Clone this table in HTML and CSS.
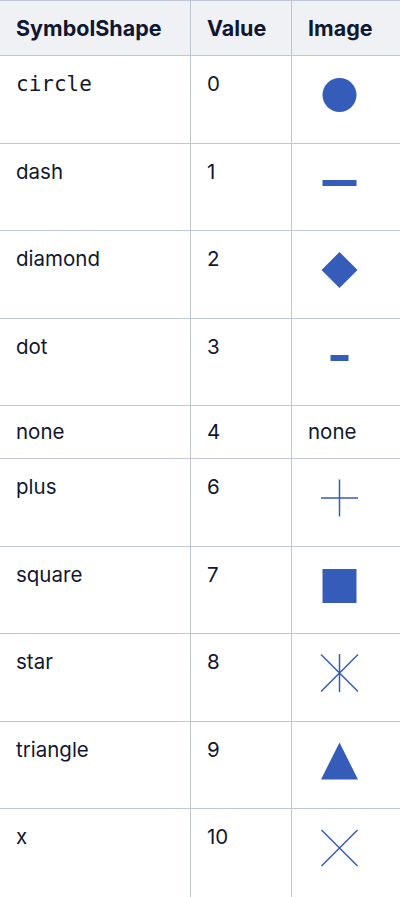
FILE: index.html
```html
<!DOCTYPE html>
<html>
<head>
<meta charset="utf-8">
<link rel="stylesheet" href="styles.css">
</head>
<body>
<table class="shapes">
  <colgroup><col class="c1"><col class="c2"><col class="c3"></colgroup>
  <thead>
    <tr><th>SymbolShape</th><th>Value</th><th>Image</th></tr>
  </thead>
  <tbody>
    <tr class="img-row"><td><code>circle</code></td><td>0</td><td class="pic"><svg class="icon" viewBox="0 0 63 46"><circle cx="31.5" cy="23" r="17"/></svg></td></tr>
    <tr class="img-row"><td>dash</td><td>1</td><td class="pic"><svg class="icon" viewBox="0 0 63 46"><rect x="14.5" y="20" width="34" height="6"/></svg></td></tr>
    <tr class="img-row"><td>diamond</td><td>2</td><td class="pic"><svg class="icon" viewBox="0 0 63 46"><polygon points="31.5,5 49.5,23 31.5,41 13.5,23"/></svg></td></tr>
    <tr class="img-row"><td>dot</td><td>3</td><td class="pic"><svg class="icon" viewBox="0 0 63 46"><rect x="22.5" y="20" width="18" height="6"/></svg></td></tr>
    <tr class="text-row"><td>none</td><td>4</td><td>none</td></tr>
    <tr class="img-row"><td>plus</td><td>6</td><td class="pic"><svg class="icon line" viewBox="0 0 63 46"><path d="M13 23H50M31.5 4.5V41.5"/></svg></td></tr>
    <tr class="img-row"><td>square</td><td>7</td><td class="pic"><svg class="icon" viewBox="0 0 63 46"><rect x="14.5" y="6" width="34" height="34"/></svg></td></tr>
    <tr class="img-row"><td>star</td><td>8</td><td class="pic"><svg class="icon line" viewBox="0 0 63 46"><path d="M13 4.5L50 41.5M50 4.5L13 41.5M31.5 4V42"/></svg></td></tr>
    <tr class="img-row"><td>triangle</td><td>9</td><td class="pic"><svg class="icon" viewBox="0 0 63 46"><polygon points="31.5,4.5 50,41.5 13,41.5"/></svg></td></tr>
    <tr class="img-row last"><td>x</td><td>10</td><td class="pic"><svg class="icon line" viewBox="0 0 63 46"><path d="M13.5 5L49.5 41M49.5 5L13.5 41"/></svg></td></tr>
  </tbody>
</table>
</body>
</html>
```
FILE: styles.css
```css
html, body {
  margin: 0;
  padding: 0;
  background: #ffffff;
}
body {
  overflow: hidden;
  font-family: Inter, "Noto Sans", sans-serif;
  color: #101731;
}
.shapes {
  border-collapse: collapse;
  table-layout: fixed;
  width: 401px;
  margin-left: -1px;
  font-size: 20.5px;
  line-height: 20px;
}
.c1 { width: 191px; }
.c2 { width: 101px; }
.c3 { width: 109px; }
.shapes th,
.shapes td {
  border: 1px solid #c0c6d3;
  padding: 16px 16px;
  text-align: left;
  vertical-align: top;
}
.shapes th {
  background: #eff1f5;
  font-weight: 700;
  font-size: 21.5px;
  padding-top: 17px;
  padding-bottom: 16px;
  height: 21px;
}
.img-row td {
  padding-top: 18px;
  height: 52.5px;
}
.img-row td.pic {
  padding-top: 16px;
  height: 54.5px;
}
.img-row.last td {
  height: 58px;
}
.img-row.last td.pic {
  height: 60px;
}
.text-row td {
  height: 20px;
}
code {
  font-family: "DejaVu Sans Mono", "Liberation Mono", monospace;
  font-size: 21px;
}
.icon {
  display: block;
  width: 63px;
  height: 46px;
  fill: #365cb9;
}
.icon.line {
  fill: none;
  stroke: #365cb9;
  stroke-width: 1.5;
}
```
